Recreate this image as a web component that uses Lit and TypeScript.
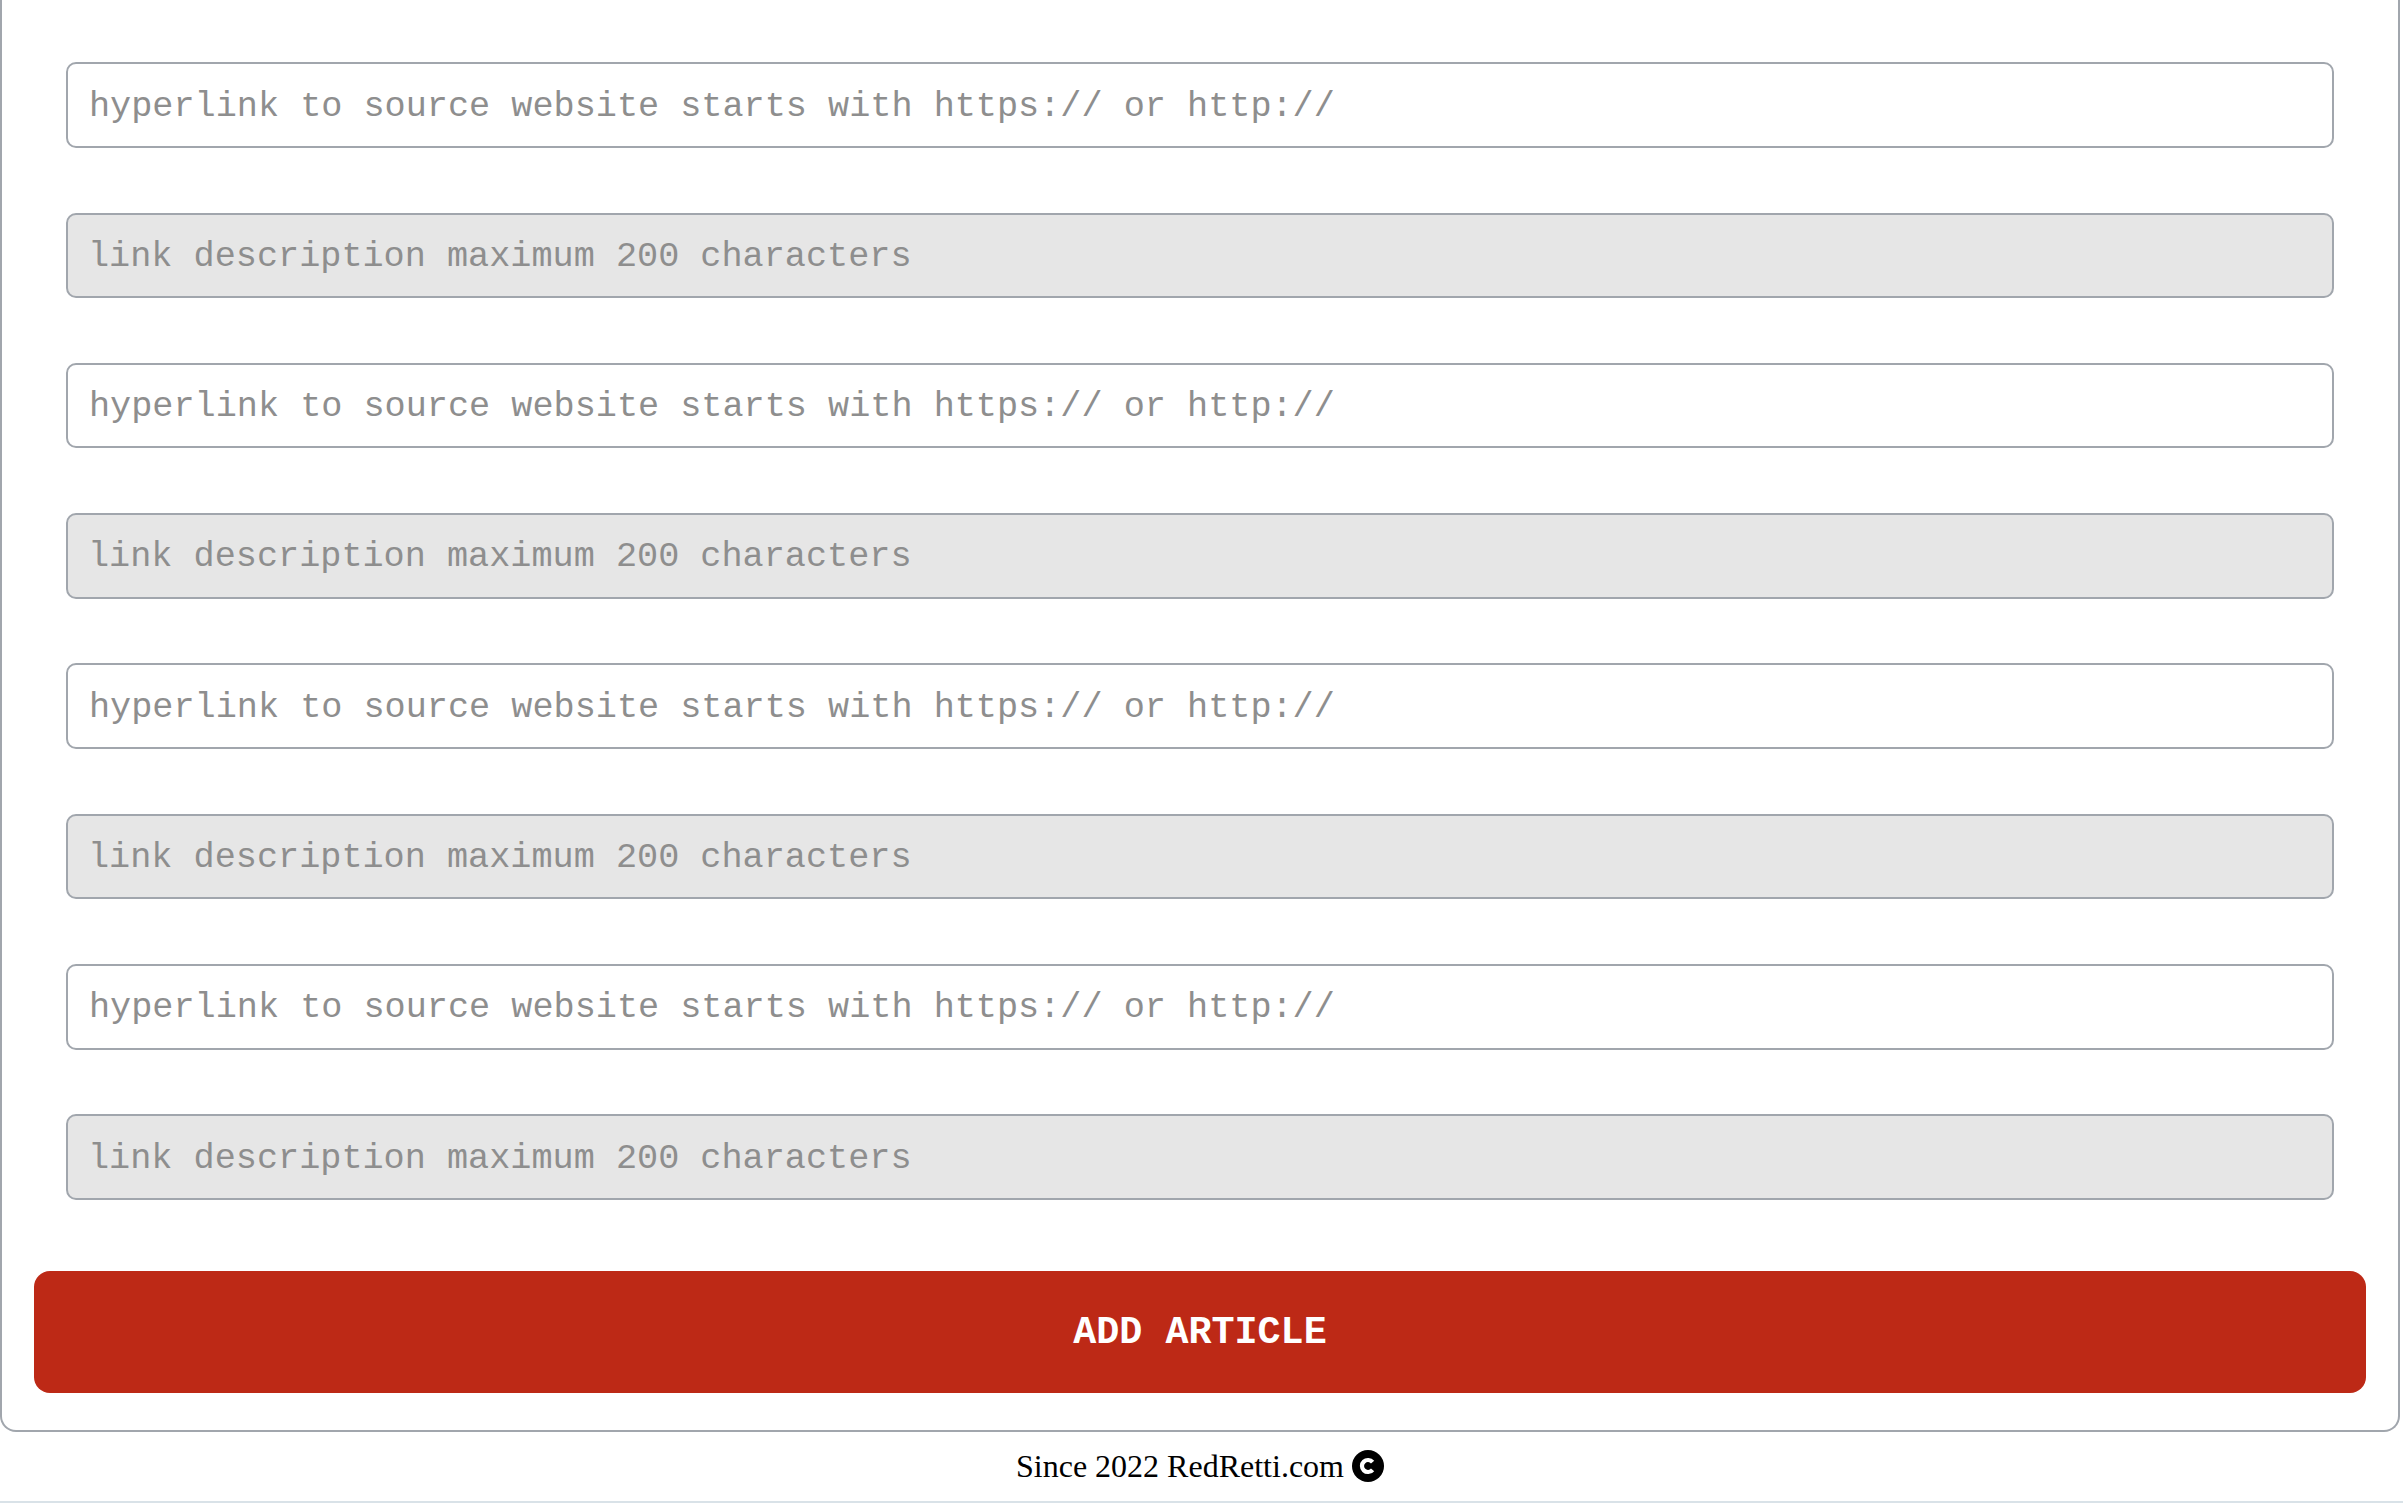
import { LitElement, html, css } from "lit";
import { customElement } from "lit/decorators.js";

@customElement("app-root")
export class AppRoot extends LitElement {
  static styles = css`
    :host { display: block; width: 2403px; height: 1503px; overflow: hidden; background: #fff; }
    .page { display: flex; flex-direction: column; height: 1503px; box-sizing: border-box; border-bottom: 2px solid #d9e2e8; }
    .card {
      box-sizing: border-box; width: 2400px; height: 1432px; flex: none;
      border: 2px solid #a1a6ad; border-top: 0; border-radius: 0 0 16px 16px;
      padding: 62.3px 32px 0; display: flex; flex-direction: column;
    }
    .fields { display: flex; flex-direction: column; gap: 64.7px; padding: 0 32px; }
    input {
      box-sizing: border-box; width: 100%; height: 85.6px; margin: 0; padding: 3px 20px 0 21px;
      border: 2px solid #a1a6ad; border-radius: 10px; outline: none;
      font: 35.2px "Liberation Mono", monospace; background: #fff;
    }
    input.alt { background: #e6e6e6; padding-left: 20px; }
    input::placeholder { color: #8e8e8e; opacity: 1; }
    button {
      margin-top: 71px; height: 122px; width: 100%; border: 0; border-radius: 16px; flex: none;
      background: #bd2916; color: #fff; padding: 2px 0 0;
      font: bold 38.4px "Liberation Mono", monospace;
    }
    .foot {
      flex: 1; display: flex; align-items: center; justify-content: center; gap: 8px;
      padding-right: 3px;
      font: 32px "Liberation Serif", serif; color: #000;
    }
    svg { display: block; width: 32px; height: 32px; margin-bottom: 2px; }
  `;

  render() {
    const rows = [0, 1, 2, 3];
    return html`<div class="page">
      <div class="card">
        <div class="fields">
          ${rows.map(() => html`
            <input type="text" placeholder="hyperlink to source website starts with https:// or http://" />
            <input class="alt" type="text" placeholder="link description maximum 200 characters" />
          `)}
        </div>
        <button>ADD ARTICLE</button>
      </div>
      <div class="foot">
        <span>Since 2022 RedRetti.com</span>
        <svg viewBox="0 0 32 32"><circle cx="16" cy="16" r="16" fill="#000"/><path d="M20.6 12.2a6 6 0 1 0 0 7.6" fill="none" stroke="#fff" stroke-width="4.2"/></svg>
      </div>
    </div>`;
  }
}
